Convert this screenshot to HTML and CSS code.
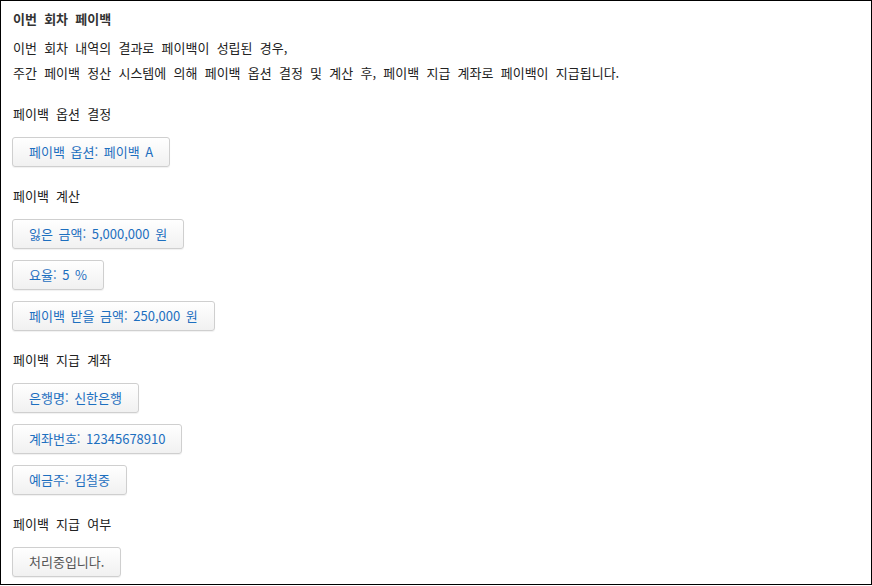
FILE: index.html
```html
<!DOCTYPE html>
<html lang="ko">
<head>
<meta charset="utf-8">
<link rel="stylesheet" href="styles.css">
</head>
<body>
<div class="frame">
  <h1 class="title">이번 회차 페이백</h1>
  <div class="intro">
    <p class="desc">이번 회차 내역의 결과로 페이백이 성립된 경우,</p>
    <p class="desc">주간 페이백 정산 시스템에 의해 페이백 옵션 결정 및 계산 후, 페이백 지급 계좌로 페이백이 지급됩니다.</p>
  </div>

  <div class="section">
    <div class="label">페이백 옵션 결정</div>
    <button class="btn">페이백 옵션: 페이백 A</button>
  </div>

  <div class="section">
    <div class="label">페이백 계산</div>
    <button class="btn">잃은 금액: 5,000,000 원</button>
    <button class="btn">요율: 5 %</button>
    <button class="btn">페이백 받을 금액: 250,000 원</button>
  </div>

  <div class="section">
    <div class="label">페이백 지급 계좌</div>
    <button class="btn">은행명: 신한은행</button>
    <button class="btn">계좌번호: 12345678910</button>
    <button class="btn">예금주: 김철중</button>
  </div>

  <div class="section">
    <div class="label">페이백 지급 여부</div>
    <button class="btn btn-grey">처리중입니다.</button>
  </div>
</div>
</body>
</html>
```

FILE: styles.css
```css
html, body {
  margin: 0;
  padding: 0;
  background: #fff;
}
body {
  font-family: "Noto Sans CJK KR", "Noto Sans", sans-serif;
  font-size: 13px;
  word-spacing: 3.6px;
  color: #222;
}
.frame {
  box-sizing: border-box;
  width: 872px;
  height: 585px;
  border: 1px solid #000;
  padding: 8px 12px 0 12px;
  overflow: hidden;
}
.title {
  margin: 0 0 6px 0;
  font-size: 13px;
  font-weight: bold;
  color: #333;
  line-height: 20px;
}
.desc {
  margin: 0;
  line-height: 25px;
}
.section {
  display: flex;
  flex-direction: column;
  align-items: flex-start;
  gap: 11px;
  margin-top: 18px;
}
.label {
  line-height: 20px;
  margin-top: 1px;
  margin-bottom: 2px;
}
.btn {
  font-family: inherit;
  font-size: 13px;
  word-spacing: 2px;
  color: #1d6fbf;
  height: 30px;
  margin-left: -1px;
  padding: 0 16px;
  border: 1px solid #cfcfcf;
  border-radius: 3px;
  background: linear-gradient(#ffffff, #f1f1f1);
  box-shadow: 0 1px 1px rgba(0,0,0,0.06);
  line-height: 28px;
  cursor: pointer;
}
.btn-grey {
  color: #555;
}
```
